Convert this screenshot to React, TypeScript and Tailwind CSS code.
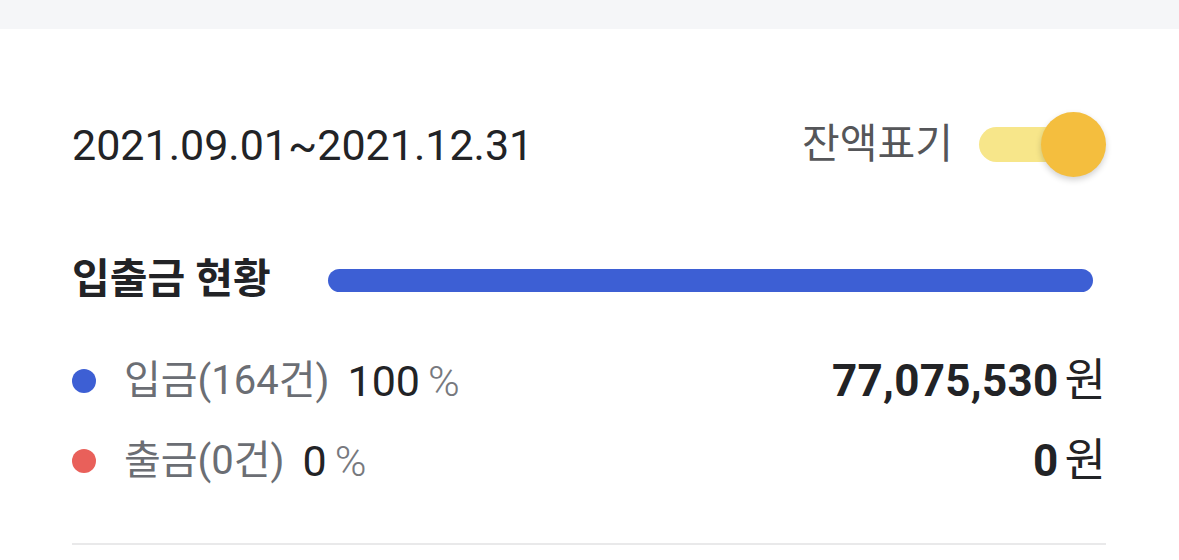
import React from 'react';

const font = { fontFamily: 'Roboto, "Noto Sans CJK KR", sans-serif' };

function Toggle() {
  return (
    <div className="relative h-[66px] w-[127px]">
      <div className="absolute left-0 top-[15px] h-[35px] w-[86px] rounded-full bg-[#f7e68a]" />
      <div className="absolute right-0 top-0 h-[65px] w-[65px] rounded-full bg-[#f4be3e] shadow-[0_3px_6px_rgba(0,0,0,0.18)]" />
    </div>
  );
}

function Row({ color, label, pct, amount }: { color: string; label: string; pct: string; amount: string }) {
  return (
    <div className="flex h-[80px] items-center">
      <span className={`mr-[28px] h-[24px] w-[24px] rounded-full ${color}`} />
      <span className="text-[40px] text-[#6b6e74]">{label}</span>
      <span className="ml-[18px] text-[43px] text-[#222326]">{pct}</span>
      <span className="ml-[8px] text-[43px] font-light text-[#77797e]">%</span>
      <span className="ml-auto text-[44px] font-bold tracking-[0.3px] text-[#222326]">{amount}</span>
      <span className="ml-[6px] text-[45px] text-[#222326]">원</span>
    </div>
  );
}

export default function App() {
  return (
    <div className="h-[560px] w-[1179px] overflow-hidden bg-white" style={font}>
      <div className="h-[29px] bg-[#f5f6f8]" />
      <div className="pl-[72px] pr-[73px]">
        <div className="mt-[83px] flex h-[66px] items-center">
          <span className="text-[43px] text-[#222326]">2021.09.01~2021.12.31</span>
          <span className="ml-auto mr-[26px] text-[41px] text-[#555659]">잔액표기</span>
          <Toggle />
        </div>
        <div className="mt-[72px] flex h-[60px] items-center">
          <span className="text-[41px] font-bold text-[#222326]">입출금 현황</span>
          <div className="ml-[57px] mr-[13px] h-[23px] flex-1 rounded-full bg-[#3d5fd4]" />
        </div>
        <div className="mt-[31px]">
          <Row color="bg-[#3d5fd4]" label="입금(164건)" pct="100" amount="77,075,530" />
          <Row color="bg-[#e9605a]" label="출금(0건)" pct="0" amount="0" />
        </div>
        <div className="mt-[42px] h-[2px] bg-[#e9e9ea]" />
      </div>
    </div>
  );
}
